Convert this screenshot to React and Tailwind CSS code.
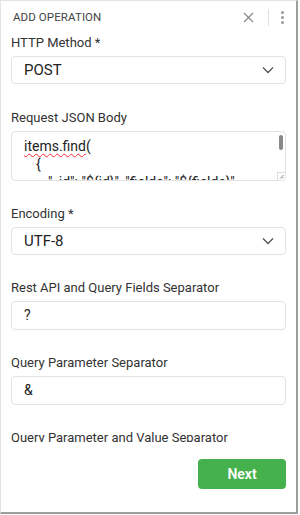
import React from "react";

const font = { fontFamily: "Roboto, 'Noto Sans', sans-serif" };

function Chevron() {
  return (
    <svg width="12" height="8" viewBox="0 0 12 8" fill="none">
      <path d="M1 1.5l5 5 5-5" stroke="#555" strokeWidth="1.3" />
    </svg>
  );
}

function Label({ children }) {
  return <div className="text-[13px] leading-4 text-[#333] mb-[5px]">{children}</div>;
}

function SelectBox({ value }) {
  return (
    <div className="h-[28px] rounded-[4px] border border-[#e2e2e2] flex items-center justify-between pl-[12px] pr-[11px]">
      <span className="text-[15px] text-[#222]">{value}</span>
      <Chevron />
    </div>
  );
}

function TextBox({ value }) {
  return (
    <div className="h-[29px] rounded-[4px] border border-[#e2e2e2] flex items-center pl-[12px]">
      <span className="text-[14px] text-[#222]">{value}</span>
    </div>
  );
}

export default function App() {
  return (
    <div className="w-[300px] h-[515px] bg-white" style={font}>
      <div className="w-[298px] h-[514px] flex flex-col border-l border-t border-[#e4e4e4] border-r-2 border-b-2 border-r-[#9e9e9e] border-b-[#9e9e9e]">
        {/* Header */}
        <div className="h-[33px] flex items-center pl-[12px] pr-[12px] shrink-0">
          <div className="text-[11.5px] text-[#444] tracking-[0.1px] flex-1">ADD OPERATION</div>
          <svg width="11" height="11" viewBox="0 0 11 11" className="mr-[14px]">
            <path d="M1 1l9 9M10 1l-9 9" stroke="#888" strokeWidth="1.2" />
          </svg>
          <div className="w-px h-[17px] bg-[#e0e0e0] mr-[12px]" />
          <div className="flex flex-col gap-[2px]">
            <span className="w-[3px] h-[3px] rounded-full bg-[#999]" />
            <span className="w-[3px] h-[3px] rounded-full bg-[#999]" />
            <span className="w-[3px] h-[3px] rounded-full bg-[#999]" />
          </div>
        </div>

        {/* Scroll area */}
        <div className="h-[408px] overflow-hidden px-[10px] pt-px shrink-0">
          <Label>HTTP Method *</Label>
          <SelectBox value="POST" />

          <div className="mt-[26px]">
            <Label>Request JSON Body</Label>
            <div className="relative h-[50px] rounded-[4px] border border-[#e2e2e2] overflow-hidden pl-[12px] pt-[5px] text-[14px] leading-[18px] text-[#222]">
              <div>
                <span className="underline decoration-wavy decoration-red-500 decoration-1 underline-offset-2">items.find</span>(
              </div>
              <div className="pl-[12px]">{"{"}</div>
              <div className="pl-[24px]">{'"_id": "${id}", "fields": "${fields}"'}</div>
              <div className="absolute right-[2px] top-[3px] w-[4px] h-[15px] rounded-full bg-[#888]" />
              <div className="absolute right-0 bottom-0 w-[8px] h-[8px] border-l border-t border-[#ddd] bg-white flex items-center justify-center">
                <svg width="5" height="5" viewBox="0 0 5 5">
                  <path d="M4.5 1L1 4.5M4.5 3L3 4.5" stroke="#777" strokeWidth="0.8" />
                </svg>
              </div>
            </div>
          </div>

          <div className="mt-[25px]">
            <Label>Encoding *</Label>
            <SelectBox value="UTF-8" />
          </div>

          <div className="mt-[25px]">
            <Label>Rest API and Query Fields Separator</Label>
            <TextBox value="?" />
          </div>

          <div className="mt-[25px]">
            <Label>Query Parameter Separator</Label>
            <TextBox value="&" />
          </div>

          <div className="mt-[25px]">
            <Label>Query Parameter and Value Separator</Label>
          </div>
        </div>

        {/* Footer */}
        <div className="flex justify-end pr-[10px] pt-[17px]">
          <button className="w-[88px] h-[30px] rounded-[4px] bg-[#45b14c] text-white text-[14px] font-semibold">
            Next
          </button>
        </div>
      </div>
    </div>
  );
}
